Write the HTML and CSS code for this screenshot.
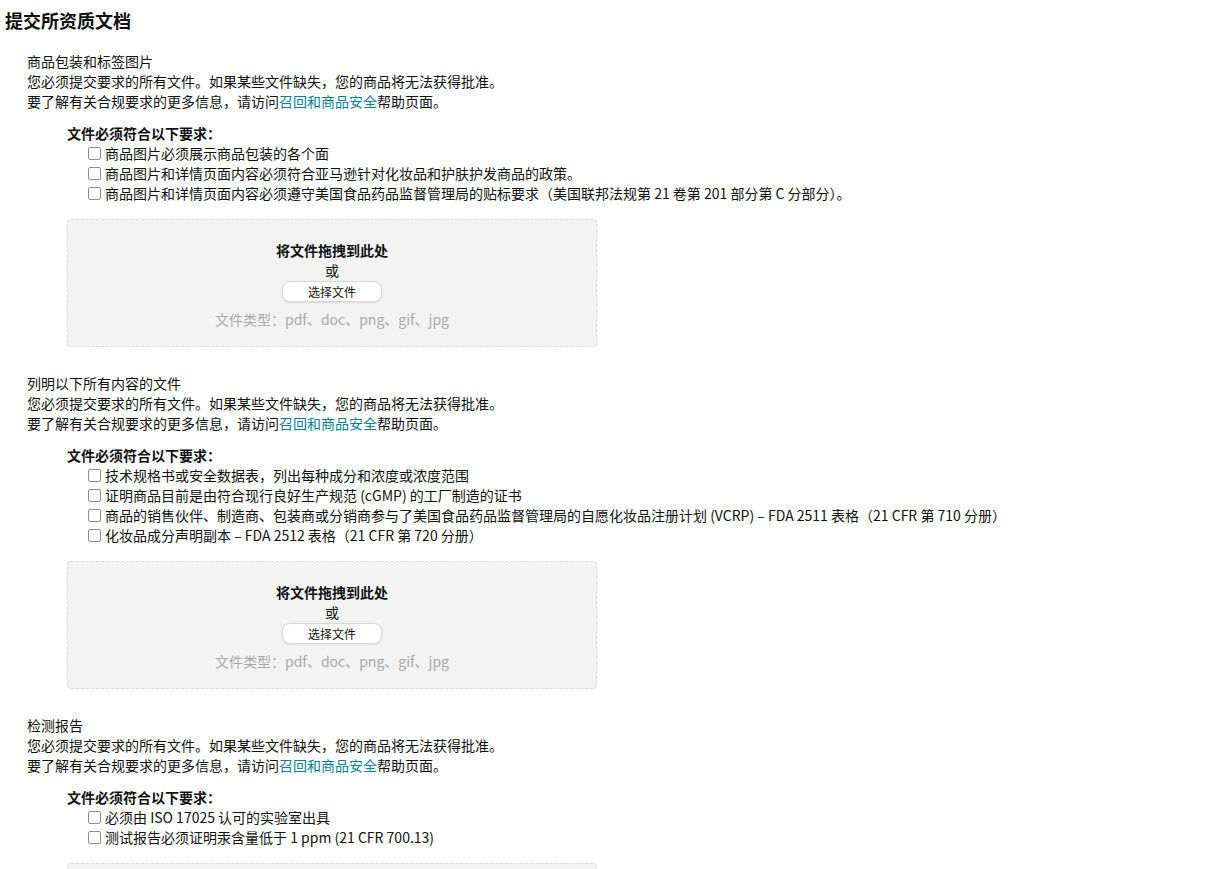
FILE: index.html
```html
<!DOCTYPE html>
<html lang="zh-CN">
<head>
<meta charset="utf-8">
<title>提交所资质文档</title>
<link rel="stylesheet" href="styles.css">
</head>
<body>
<div class="page">
  <h1 class="page-title">提交所资质文档</h1>

  <section class="doc-section">
    <div class="doc-title">商品包装和标签图片</div>
    <div class="doc-line">您必须提交要求的所有文件。如果某些文件缺失，您的商品将无法获得批准。</div>
    <div class="doc-line">要了解有关合规要求的更多信息，请访问<a class="link" href="#">召回和商品安全</a>帮助页面。</div>
    <div class="req">
      <div class="req-heading">文件必须符合以下要求：</div>
      <label class="req-item"><input type="checkbox" class="cb"><span>商品图片必须展示商品包装的各个面</span></label>
      <label class="req-item"><input type="checkbox" class="cb"><span>商品图片和详情页面内容必须符合亚马逊针对化妆品和护肤护发商品的政策。</span></label>
      <label class="req-item"><input type="checkbox" class="cb"><span>商品图片和详情页面内容必须遵守美国食品药品监督管理局的贴标要求（美国联邦法规第 21 卷第 201 部分第 C 分部分）。</span></label>
    </div>
    <div class="dropzone">
      <div class="dz-title">将文件拖拽到此处</div>
      <div class="dz-or">或</div>
      <button class="dz-btn" type="button">选择文件</button>
      <div class="dz-types">文件类型：pdf、doc、png、gif、jpg</div>
    </div>
  </section>

  <section class="doc-section">
    <div class="doc-title">列明以下所有内容的文件</div>
    <div class="doc-line">您必须提交要求的所有文件。如果某些文件缺失，您的商品将无法获得批准。</div>
    <div class="doc-line">要了解有关合规要求的更多信息，请访问<a class="link" href="#">召回和商品安全</a>帮助页面。</div>
    <div class="req">
      <div class="req-heading">文件必须符合以下要求：</div>
      <label class="req-item"><input type="checkbox" class="cb"><span>技术规格书或安全数据表，列出每种成分和浓度或浓度范围</span></label>
      <label class="req-item"><input type="checkbox" class="cb"><span>证明商品目前是由符合现行良好生产规范 (cGMP) 的工厂制造的证书</span></label>
      <label class="req-item"><input type="checkbox" class="cb"><span>商品的销售伙伴、制造商、包装商或分销商参与了美国食品药品监督管理局的自愿化妆品注册计划 (VCRP) – FDA 2511 表格（21 CFR 第 710 分册）</span></label>
      <label class="req-item"><input type="checkbox" class="cb"><span>化妆品成分声明副本 – FDA 2512 表格（21 CFR 第 720 分册）</span></label>
    </div>
    <div class="dropzone">
      <div class="dz-title">将文件拖拽到此处</div>
      <div class="dz-or">或</div>
      <button class="dz-btn" type="button">选择文件</button>
      <div class="dz-types">文件类型：pdf、doc、png、gif、jpg</div>
    </div>
  </section>

  <section class="doc-section">
    <div class="doc-title">检测报告</div>
    <div class="doc-line">您必须提交要求的所有文件。如果某些文件缺失，您的商品将无法获得批准。</div>
    <div class="doc-line">要了解有关合规要求的更多信息，请访问<a class="link" href="#">召回和商品安全</a>帮助页面。</div>
    <div class="req">
      <div class="req-heading">文件必须符合以下要求：</div>
      <label class="req-item"><input type="checkbox" class="cb"><span>必须由 ISO 17025 认可的实验室出具</span></label>
      <label class="req-item"><input type="checkbox" class="cb"><span>测试报告必须证明汞含量低于 1 ppm (21 CFR 700.13)</span></label>
    </div>
    <div class="dropzone">
      <div class="dz-title">将文件拖拽到此处</div>
      <div class="dz-or">或</div>
      <button class="dz-btn" type="button">选择文件</button>
      <div class="dz-types">文件类型：pdf、doc、png、gif、jpg</div>
    </div>
  </section>
</div>
</body>
</html>
```

FILE: styles.css
```css
html, body {
  margin: 0;
  padding: 0;
  background: #ffffff;
}

body {
  font-family: "Noto Sans CJK SC", "Noto Sans", sans-serif;
  font-size: 14px;
  line-height: 20px;
  color: #0f1111;
}

.page {
  padding: 8px 5px 40px 5px;
}

.page-title {
  margin: 0;
  font-size: 18px;
  line-height: 24px;
  font-weight: 700;
}

.doc-section {
  margin: 19px 0 0 22px;
}

.doc-section + .doc-section {
  margin-top: 26px;
}

.doc-title,
.doc-line {
  white-space: nowrap;
}

.link {
  color: #008296;
  text-decoration: none;
}

.req {
  margin: 12px 0 0 40px;
}

.req-heading {
  font-weight: 700;
}

.req-item {
  display: flex;
  align-items: center;
  padding-left: 21px;
  white-space: nowrap;
}

.cb {
  appearance: none;
  -webkit-appearance: none;
  width: 13px;
  height: 13px;
  margin: 0 4px 0 0;
  border: 1px solid #8d8d8d;
  border-radius: 2px;
  background: #ffffff;
  flex: none;
}

.dropzone {
  margin: 16px 0 0 40px;
  width: 530px;
  box-sizing: border-box;
  padding: 20px 0 17px;
  border: 1px dashed #dcdcdc;
  border-radius: 4px;
  background: #f3f3f3;
  display: flex;
  flex-direction: column;
  align-items: center;
}

.dz-title {
  font-weight: 700;
}

.dz-btn {
  margin-top: 1px;
  width: 100px;
  height: 21px;
  padding: 0;
  border: 1px solid #d5d9d9;
  border-radius: 8px;
  background: #ffffff;
  box-shadow: 0 1px 2px rgba(15, 17, 17, 0.1);
  font-family: "Noto Sans CJK SC", "Noto Sans", sans-serif;
  font-size: 12px;
  line-height: 19px;
  color: #0f1111;
}

.dz-types {
  margin-top: 7px;
  color: #aaaaaa;
}
```
